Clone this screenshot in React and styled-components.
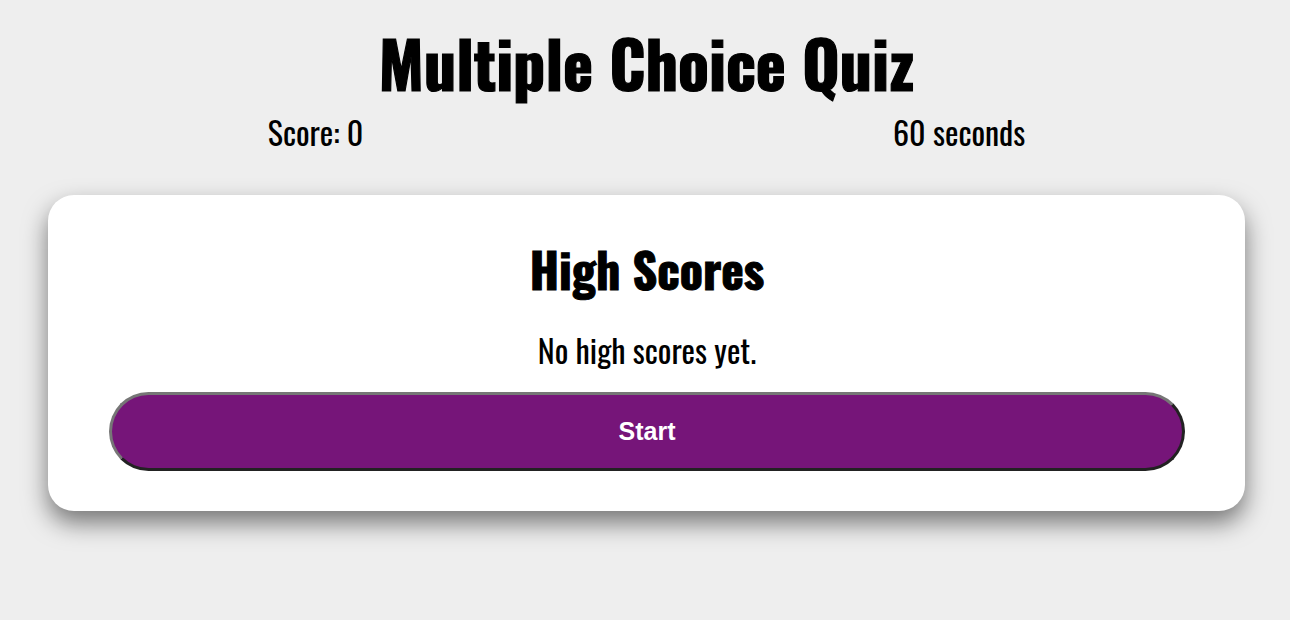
import styled, { createGlobalStyle } from "styled-components";

const GlobalStyle = createGlobalStyle`
  body {
    margin: 0;
    padding-left: 3px;
    min-height: 100vh;
    background-color: #eeeeee;
    font-family: "Oswald", "Liberation Sans Narrow", "DejaVu Sans Condensed", "Roboto", sans-serif;
  }
`;

function App() {
  return (
    <>
      <GlobalStyle />
      <Header>
        <Title>Multiple Choice Quiz</Title>
        <StatusBar>
          <Status>Score: 0</Status>
          <Status>60 seconds</Status>
        </StatusBar>
      </Header>

      <Card>
        <CardTitle>High Scores</CardTitle>
        <EmptyText>No high scores yet.</EmptyText>
        <StartButton>Start</StartButton>
      </Card>
    </>
  );
}

const Header = styled.header`
  display: flex;
  flex-direction: column;
  align-items: center;
  padding-top: 22px;
`;

const Title = styled.h1`
  margin: 0;
  font-size: 64px;
  font-weight: 700;
  line-height: 80px;
  -webkit-text-stroke: 1.2px #000;
`;

const StatusBar = styled.div`
  display: flex;
  justify-content: space-around;
  width: 100%;
  margin-top: 10px;
`;

const Status = styled.span`
  font-size: 32px;
  line-height: 40px;
`;

const Card = styled.main`
  width: 93%;
  margin: 43px auto 0;
  box-sizing: border-box;
  padding: 42px 60px 40px 61px;
  background-color: #fff;
  border-radius: 26px;
  box-shadow: 0 12px 24px rgba(0, 0, 0, 0.5);
  display: flex;
  flex-direction: column;
  align-items: center;
`;

const CardTitle = styled.h2`
  margin: 0;
  font-size: 48px;
  font-weight: 700;
  line-height: 64px;
  -webkit-text-stroke: 1px #000;
`;

const EmptyText = styled.p`
  margin: 29px 0 22px;
  font-size: 32px;
  line-height: 40px;
`;

const StartButton = styled.button`
  width: 100%;
  height: 79px;
  border-radius: 40px;
  border: 3px solid;
  border-color: #767676 #222 #222 #767676;
  background-color: #761579;
  color: #fff;
  font-family: "Liberation Sans", Arial, sans-serif;
  font-size: 25px;
  font-weight: 700;
  cursor: pointer;
`;

export default App;
